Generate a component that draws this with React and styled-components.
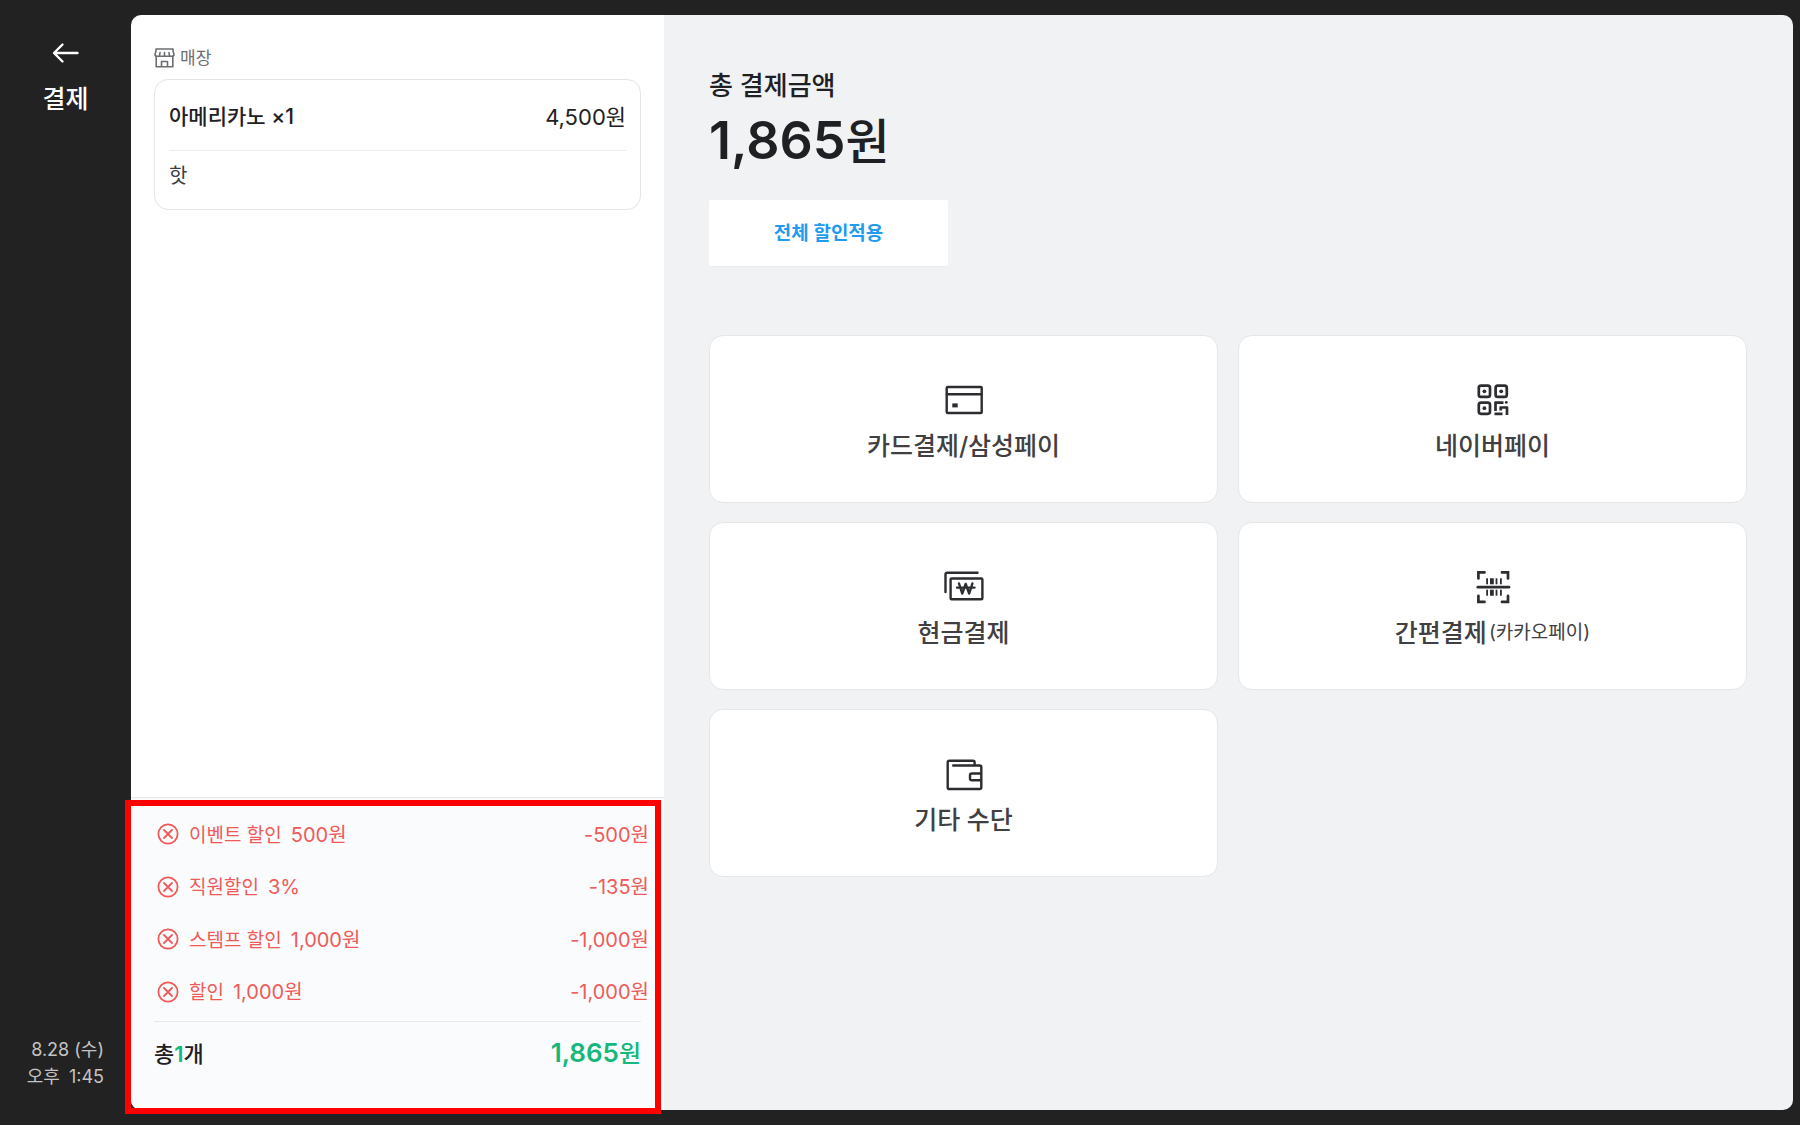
import React from "react";
import styled, { createGlobalStyle } from "styled-components";

const GlobalStyle = createGlobalStyle`
  *, *::before, *::after { box-sizing: border-box; }
  body {
    margin: 0;
    background: #222222;
    color: #1f2023;
    font-family: Inter, "Noto Sans CJK KR", sans-serif;
  }
  button {
    font: inherit;
    color: inherit;
    border: 0;
    padding: 0;
    background: none;
    cursor: pointer;
  }
  h1, h2, p, ul { margin: 0; padding: 0; }
  ul { list-style: none; }
  svg { display: block; flex: none; }
`;

const Screen = styled.div`
  display: flex;
  min-height: 100vh;
  padding: 15px 7px 15px 0;
`;

const Sidebar = styled.aside`
  flex: none;
  width: 131px;
  display: flex;
  flex-direction: column;
  justify-content: space-between;
  color: #ffffff;
`;

const SidebarTop = styled.div`
  display: flex;
  flex-direction: column;
  align-items: center;
  gap: 12px;
  padding-top: 20px;
`;

const BackButton = styled.button`
  width: 36px;
  height: 36px;
  display: grid;
  place-items: center;
`;

const PageName = styled.h1`
  font-size: 25px;
  line-height: 32px;
  font-weight: 500;
`;

const Clock = styled.p`
  padding: 0 27px 20px 0;
  text-align: right;
  font-size: 18px;
  line-height: 27px;
  color: #c4c4c4;
`;

const ClockTime = styled.span`
  display: flex;
  justify-content: flex-end;
  gap: 9px;
`;

const Panel = styled.main`
  flex: 1;
  display: grid;
  grid-template-columns: minmax(420px, 533fr) 1129fr;
`;

const OrderColumn = styled.section`
  display: flex;
  flex-direction: column;
  justify-content: space-between;
  background: #ffffff;
  border-radius: 10px 0 0 10px;
`;

const OrderList = styled.div`
  padding: 30px 23px 24px;
`;

const Place = styled.h2`
  display: flex;
  align-items: center;
  gap: 5px;
  height: 26px;
  margin-bottom: 8px;
  font-size: 17px;
  font-weight: 400;
  color: #6b6d70;
`;

const PlaceName = styled.span`
  padding-bottom: 3px;
`;

const OrderCard = styled.article`
  padding: 0 14px;
  border: 1px solid #e3e4e5;
  border-radius: 14px;
`;

const OrderLine = styled.div`
  display: flex;
  align-items: center;
  justify-content: space-between;
  height: 71px;
  border-bottom: 1px solid #ececec;
  font-size: 21px;
  font-weight: 500;
`;

const OrderPrice = styled.span`
  font-size: 22px;
  font-weight: 400;
`;

const OrderOption = styled.p`
  height: 58px;
  padding-top: 10px;
  font-size: 20px;
  line-height: 30px;
  color: #3c3d40;
`;

const Summary = styled.section`
  position: relative;
  height: 313px;
  padding: 10px 23px 0;
  border-top: 1px solid #e6e8ea;
  border-radius: 0 0 0 10px;
  background: #fafbfd;
`;

const Highlight = styled.div`
  position: absolute;
  inset: 2px 3px -4px -6px;
  border: 6px solid #fe0000;
  pointer-events: none;
`;

const DiscountList = styled.ul`
  display: grid;
  grid-auto-rows: 1fr;
  height: 213px;
  padding-bottom: 3px;
  margin: 0 -8px 0 1px;
  color: #ef5a58;
`;

const Discount = styled.li`
  display: flex;
  align-items: center;
`;

const RemoveButton = styled.button`
  width: 26px;
  height: 26px;
  margin-right: 8px;
  display: grid;
  place-items: center;
`;

const DiscountText = styled.span`
  flex: 1;
  display: flex;
  align-items: baseline;
  padding-bottom: 2px;
  font-size: 19px;
`;

const DiscountValue = styled.span`
  margin-left: ${(p) => (p.$end ? "auto" : "9px")};
  font-size: 20px;
`;

const Total = styled.div`
  display: flex;
  align-items: center;
  justify-content: space-between;
  height: 60px;
  border-top: 1px solid #e6e8ea;
  font-size: 22px;
  font-weight: 500;
`;

const Green = styled.span`
  color: #14b87c;
  font-weight: 600;
`;

const TotalPrice = styled(Green)`
  font-size: 26px;
`;

const Unit = styled.span`
  font-size: ${(p) => p.$size}px;
  font-weight: 500;
`;

const PayColumn = styled.section`
  padding: 53px 46px 24px 45px;
  background: #f0f2f4;
  border-radius: 0 10px 10px 0;
`;

const PayTitle = styled.h2`
  font-size: 26px;
  line-height: 36px;
  font-weight: 500;
`;

const PayAmount = styled.p`
  margin-bottom: 21px;
  font-size: 52px;
  line-height: 74px;
  font-weight: 600;
`;

const DiscountButton = styled.button`
  width: 239px;
  height: 67px;
  padding-bottom: 3px;
  margin-bottom: 68px;
  border-radius: 2px;
  border-bottom: 1px solid #e8eaec;
  background: #ffffff;
  color: #1f9bef;
  font-size: 19px;
  font-weight: 600;
`;

const Methods = styled.div`
  display: grid;
  grid-template-columns: 1fr 1fr;
  gap: 19px 20px;
`;

const Method = styled.button`
  display: flex;
  flex-direction: column;
  align-items: center;
  justify-content: center;
  gap: 8px;
  height: 168px;
  padding-top: 6px;
  border: 1px solid #e4e6e8;
  border-radius: 14px;
  background: #ffffff;
  color: #404042;
`;

const MethodName = styled.span`
  display: flex;
  align-items: center;
  gap: 2px;
  font-size: 25px;
  line-height: 36px;
  font-weight: 500;
`;

const MethodNote = styled.span`
  font-size: 19px;
  font-weight: 400;
`;

const MethodSvg = styled.svg.attrs({
  width: 40,
  height: 40,
  viewBox: "0 0 40 40",
  fill: "none",
  stroke: "#2c2d30",
  strokeLinejoin: "round",
  "aria-hidden": true,
})`
  stroke-width: ${(p) => p.$weight || 2.4};
  stroke-linecap: ${(p) => p.$cap || "round"};
`;

const BackIcon = () => (
  <svg width="28" height="24" viewBox="0 0 28 24" fill="none" stroke="#fff" strokeWidth="2.4" strokeLinecap="round" strokeLinejoin="round" aria-hidden="true">
    <path d="M25.5 12H2.5M10.5 3.5L2 12L10.5 20.5" />
  </svg>
);

const StoreIcon = () => (
  <svg width="21" height="20" viewBox="0 0 21 20" fill="none" stroke="#6b6d70" strokeWidth="1.6" strokeLinejoin="round" strokeLinecap="round" aria-hidden="true">
    <path d="M2 1H19V3L20 6.5C20 8 18.5 8.3 17.8 8.3H3.2C2.5 8.3 1 8 1 6.5L2 3Z" />
    <path d="M6 4.5L5.5 8M10.5 4.5V8M15 4.5L15.5 8M2.2 8.3V18.8H18.8V8.3M7.5 18.5V13.5H13.5V18.5" />
  </svg>
);

const RemoveIcon = () => (
  <svg width="22" height="22" viewBox="0 0 22 22" fill="none" stroke="#ef5a58" strokeWidth="1.8" strokeLinecap="round" aria-hidden="true">
    <circle cx="11" cy="11" r="9.6" />
    <path d="M7 7L15 15M15 7L7 15" />
  </svg>
);

const CardIcon = () => (
  <MethodSvg>
    <rect x="2.7" y="7" width="35" height="26" rx="1" />
    <path d="M3 14.3H37" />
    <rect x="8.3" y="23.4" width="5.4" height="4" fill="#2c2d30" stroke="none" />
  </MethodSvg>
);

const QrIcon = () => (
  <MethodSvg $cap="butt" $weight={2.7}>
    <rect x="5.8" y="5.7" width="11.2" height="11.2" rx="2.2" />
    <rect x="22.6" y="5.7" width="11.2" height="11.2" rx="2.2" />
    <rect x="5.8" y="22.6" width="11.2" height="11.2" rx="2.2" />
    <g fill="#2c2d30" stroke="none">
      <circle cx="11.4" cy="11.3" r="1.9" />
      <circle cx="28.2" cy="11.3" r="1.9" />
      <circle cx="11.4" cy="28.2" r="1.9" />
      <circle cx="33.3" cy="22.4" r="1.4" />
    </g>
    <path d="M22.5 31V22.6H30.5M26.5 27.5H34V35M27.7 27.5V30.6M21.5 33.9H29.5" />
  </MethodSvg>
);

const CashIcon = () => (
  <MethodSvg>
    <path d="M1.5 25V7.5Q1.5 5.8 3.2 5.8H33.5" />
    <rect x="6.6" y="11.5" width="31.8" height="20.7" rx="1" />
    <path d="M15 16.5L18.2 26.5L21.7 17L25.2 26.5L28.4 16.5M13 20.6H30.5" />
  </MethodSvg>
);

const BarcodeIcon = () => (
  <MethodSvg $weight={2.7}>
    <path strokeLinejoin="miter" d="M11.5 5.4H5.4V11.5M29 5.4H35V11.5M5.4 28.8V34.9H11.5M29 34.9H35V28.8" />
    <path d="M4.8 20.2H36" />
    <g fill="#2c2d30" stroke="none">
      {[11.3, 22.7].map((y) => (
        <React.Fragment key={y}>
          <rect x="13.2" y={y} width="1.8" height="6" />
          <rect x="17" y={y} width="3.8" height="6" />
          <rect x="22.6" y={y} width="1.8" height="6" />
          <rect x="27" y={y} width="1.8" height="6" />
        </React.Fragment>
      ))}
    </g>
  </MethodSvg>
);

const WalletIcon = () => (
  <MethodSvg>
    <path d="M9.2 11.5H35.7Q37.3 11.5 37.3 13V33.5Q37.3 35 35.7 35H5.3Q3.7 35 3.7 33.4V8.2Q3.7 6.7 5.3 6.7H29Q30.6 6.7 30.6 8.2V11.3" />
    <path d="M37 19.5H28Q26 19.5 26 21.3V24.5Q26 26.2 28 26.2H37" />
  </MethodSvg>
);

const discounts = [
  { name: "이벤트 할인", value: "500원", amount: "-500원" },
  { name: "직원할인", value: "3%", amount: "-135원" },
  { name: "스템프 할인", value: "1,000원", amount: "-1,000원" },
  { name: "할인", value: "1,000원", amount: "-1,000원" },
];

const methods = [
  { name: "카드결제/삼성페이", Icon: CardIcon },
  { name: "네이버페이", Icon: QrIcon },
  { name: "현금결제", Icon: CashIcon },
  { name: "간편결제", note: "(카카오페이)", Icon: BarcodeIcon },
  { name: "기타 수단", Icon: WalletIcon },
];

export default function App() {
  return (
    <>
      <GlobalStyle />
      <Screen>
        <Sidebar>
          <SidebarTop>
            <BackButton type="button" aria-label="뒤로">
              <BackIcon />
            </BackButton>
            <PageName>결제</PageName>
          </SidebarTop>
          <Clock>
            8.28 (수)
            <ClockTime>
              <span>오후</span>
              <span>1:45</span>
            </ClockTime>
          </Clock>
        </Sidebar>

        <Panel>
          <OrderColumn>
            <OrderList>
              <Place>
                <StoreIcon />
                <PlaceName>매장</PlaceName>
              </Place>
              <OrderCard>
                <OrderLine>
                  <span>아메리카노 ×1</span>
                  <OrderPrice>4,500원</OrderPrice>
                </OrderLine>
                <OrderOption>핫</OrderOption>
              </OrderCard>
            </OrderList>

            <Summary>
              <DiscountList>
                {discounts.map((d) => (
                  <Discount key={d.name}>
                    <RemoveButton type="button" aria-label={`${d.name} 삭제`}>
                      <RemoveIcon />
                    </RemoveButton>
                    <DiscountText>
                      {d.name}
                      <DiscountValue>{d.value}</DiscountValue>
                      <DiscountValue $end>{d.amount}</DiscountValue>
                    </DiscountText>
                  </Discount>
                ))}
              </DiscountList>
              <Total>
                <span>
                  총<Green>1</Green>개
                </span>
                <TotalPrice>
                  1,865<Unit $size={24}>원</Unit>
                </TotalPrice>
              </Total>
              <Highlight />
            </Summary>
          </OrderColumn>

          <PayColumn>
            <PayTitle>총 결제금액</PayTitle>
            <PayAmount>
              1,865<Unit $size={48}>원</Unit>
            </PayAmount>
            <DiscountButton type="button">전체 할인적용</DiscountButton>
            <Methods>
              {methods.map(({ name, note, Icon }) => (
                <Method key={name} type="button">
                  <Icon />
                  <MethodName>
                    {name}
                    {note && <MethodNote>{note}</MethodNote>}
                  </MethodName>
                </Method>
              ))}
            </Methods>
          </PayColumn>
        </Panel>
      </Screen>
    </>
  );
}
